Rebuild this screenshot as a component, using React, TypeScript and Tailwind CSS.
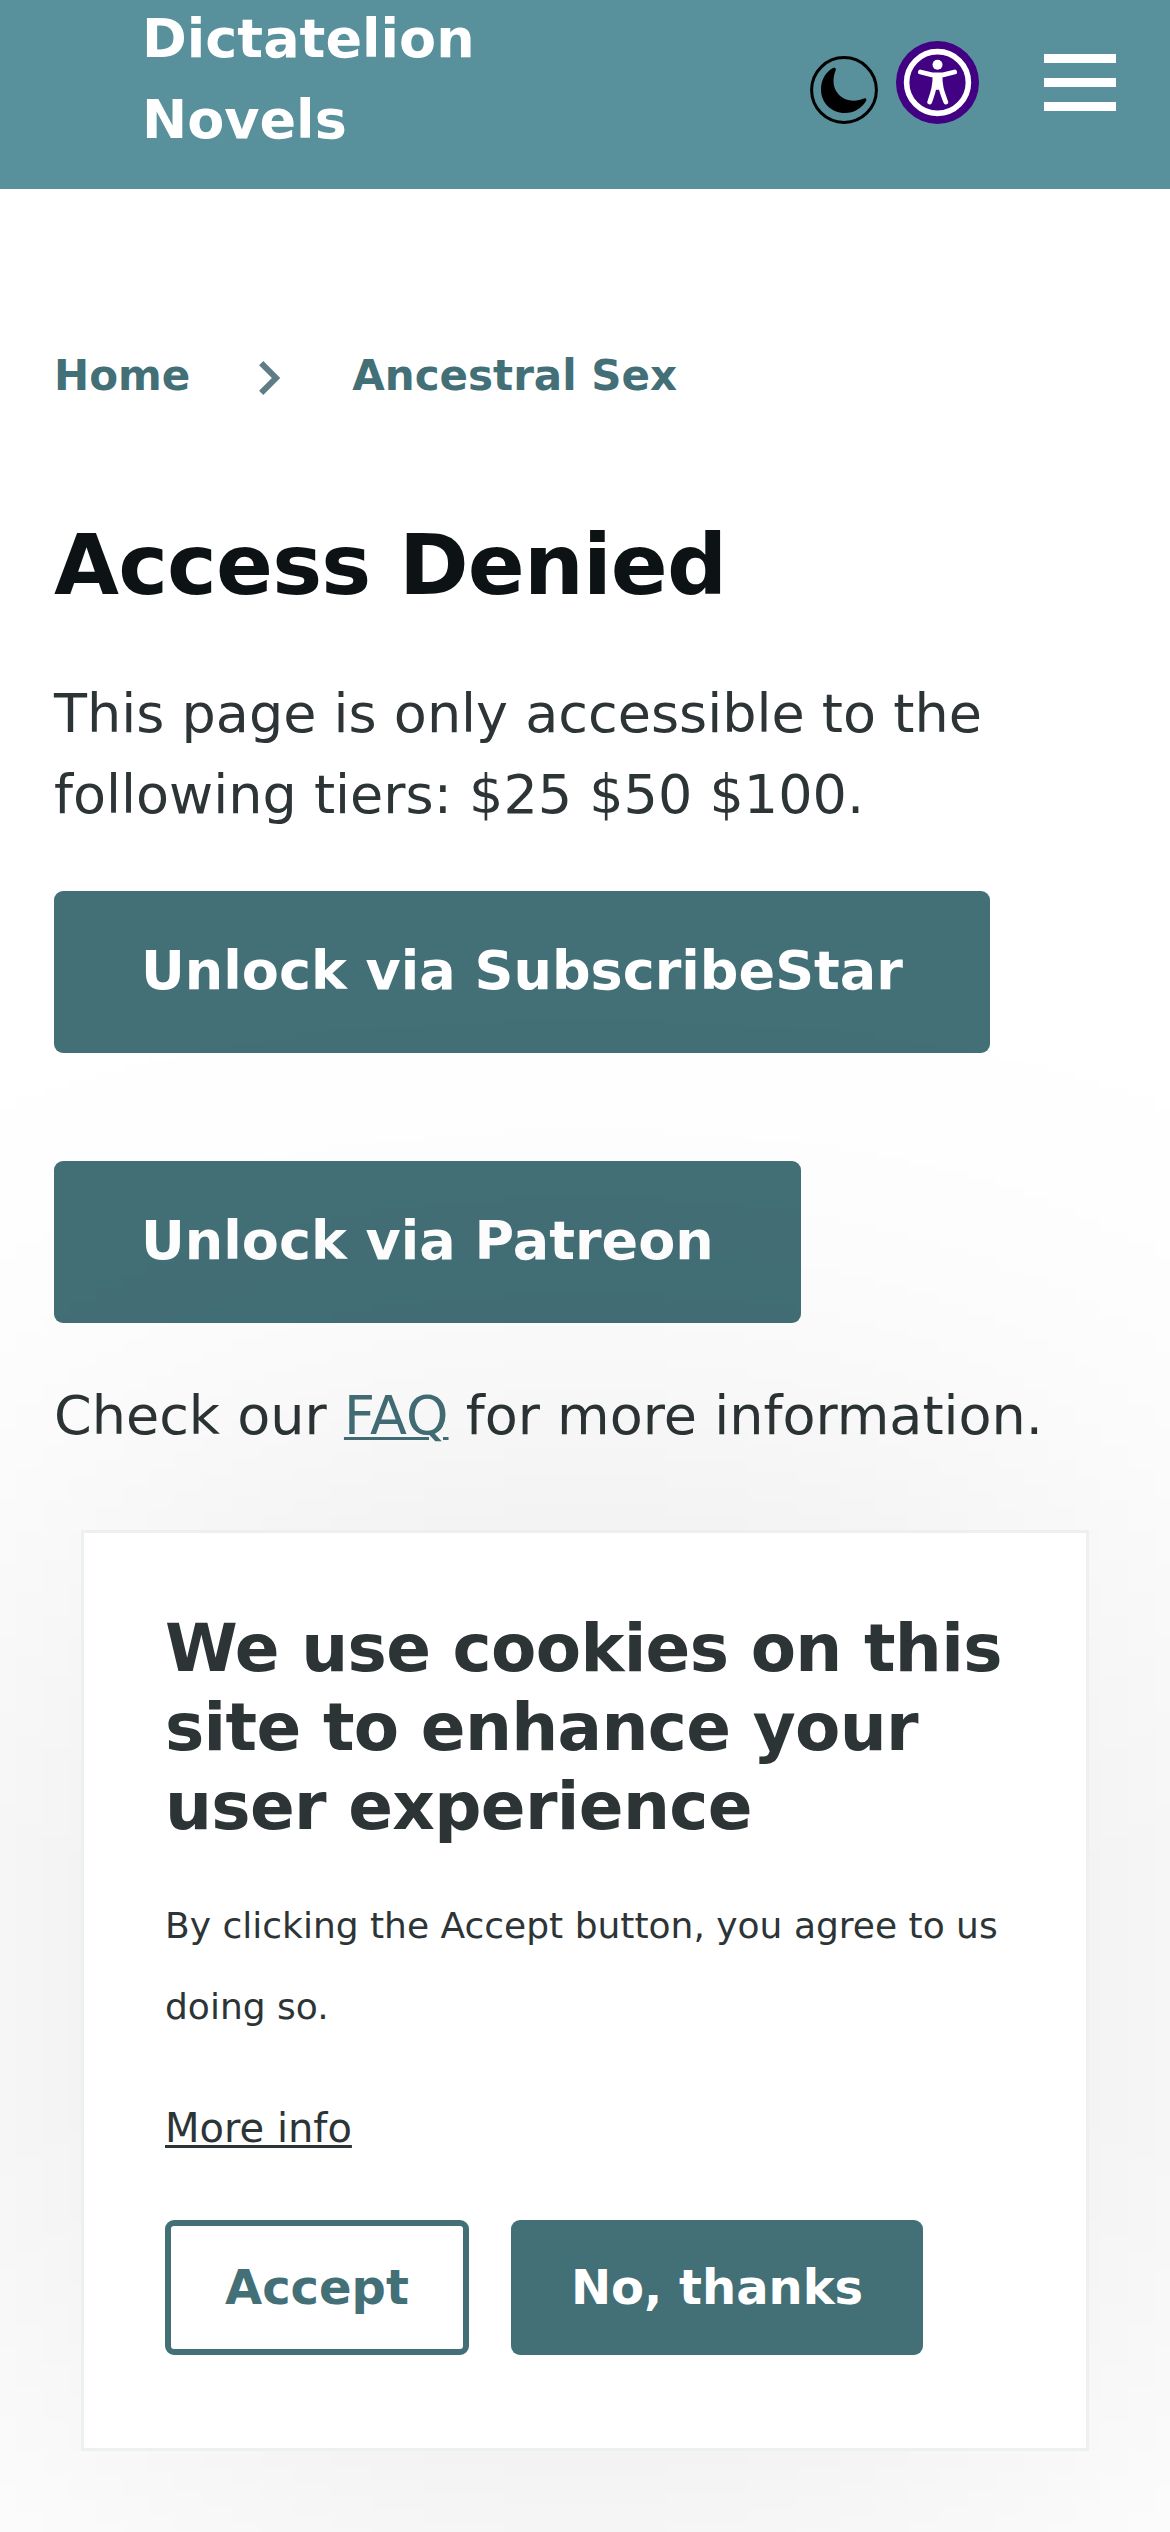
import React from 'react';

const breadcrumbs = ['Home', 'Ancestral Sex'];

function MoonIcon() {
  return (
    <svg width="68" height="68" viewBox="0 0 68 68" className="mt-[15px]">
      <circle cx="34" cy="34" r="32.4" fill="none" stroke="#000" strokeWidth="3" />
      <path
        d="M25.4 12.2 C24.5 11.5 23.5 11.7 22.5 12.3 C15 16.8 11 24.5 11 33.5 C11 47 21.5 57 34.8 57 C44 57 51.5 52.5 56 45 C56.8 43.5 56.5 41.8 54.5 42.2 C51 43.8 47.5 44.7 43.5 44.7 C32 44.7 23.5 36 23.5 25 C23.5 20.5 24.5 17.5 25.6 14.5 C25.9 13.6 26 12.7 25.4 12.2 Z"
        fill="#000"
      />
    </svg>
  );
}

function AccessibilityIcon() {
  return (
    <svg width="83" height="83" viewBox="0 0 83 83">
      <circle cx="41.5" cy="41.5" r="41.5" fill="#420083" />
      <circle cx="41.5" cy="41.5" r="30.9" fill="none" stroke="#fff" strokeWidth="5.6" />
      <circle cx="41.5" cy="23.8" r="5" fill="#fff" />
      <g fill="none" stroke="#fff" strokeWidth="4.8" strokeLinecap="round" strokeLinejoin="round">
        <path d="M24.4 31 L36 33.8 H47 L58.6 31" />
        <path d="M39 35 C39 45 37.5 50 33.7 61" />
        <path d="M44 35 C44 45 45.5 50 49.8 61" />
      </g>
      <path d="M38 34 H45 V48 L41.5 49 L38 48 Z" fill="#fff" />
    </svg>
  );
}

function Header() {
  return (
    <header className="flex h-[189px] justify-between bg-[#58909c] pl-[142px] pr-[54px]">
      <a href="#" className="-mt-0.5 w-[400px] text-[54px] leading-[81px] font-bold text-white">
        Dictatelion Novels
      </a>
      <div className="flex items-start pt-[41px]">
        <button aria-label="Dark mode"><MoonIcon /></button>
        <button aria-label="Accessibility" className="ml-[18px]"><AccessibilityIcon /></button>
        <button aria-label="Menu" className="mt-[13px] ml-[65px] flex w-[72px] flex-col gap-[15px]">
          <span className="h-[9px] w-full bg-white" />
          <span className="h-[9px] w-full bg-white" />
          <span className="h-[9px] w-full bg-white" />
        </button>
      </div>
    </header>
  );
}

function CookieBanner() {
  return (
    <div className="absolute top-[1530px] left-[81px] h-[921px] w-[1008px]">
      <div className="absolute inset-0 bg-black/10 blur-[270px]" />
      <section className="relative h-full border-[3px] border-[#edf0f0] bg-white px-[81px] pt-[76px]">
        <h2 className="text-[66px] leading-[79.2px] font-bold tracking-[-0.01em]">
          We use cookies on this site to enhance your user experience
        </h2>
        <p className="mt-[38.4px] text-[36px] leading-[81px]">
          By clicking the Accept button, you agree to us doing so.
        </p>
        <button className="mt-[54px] block text-[40px] leading-[54px] underline decoration-[3px] underline-offset-[3px]">
          More info
        </button>
        <div className="mt-[65px] flex gap-[42px]">
          <button className="h-[135px] rounded-[9px] border-6 border-[#436f77] px-[54px] pb-0.5 text-[48px] leading-none font-bold text-[#436f77]">
            Accept
          </button>
          <button className="h-[135px] rounded-[9px] bg-[#436f77] px-[60px] pb-0.5 text-[48px] leading-none font-bold text-white">
            No, thanks
          </button>
        </div>
      </section>
    </div>
  );
}

export default function App() {
  return (
    <div className="relative h-[2532px] w-[1170px] overflow-hidden bg-white font-['DejaVu_Sans',sans-serif] text-[#2d3436]">
      <Header />
      <main className="px-[54px] pt-[160px]">
        <nav className="flex items-center text-[42px] leading-[54px] font-bold text-[#436f77]">
          {breadcrumbs.map((crumb, i) => (
            <React.Fragment key={crumb}>
              {i > 0 && (
                <svg width="22" height="34" viewBox="0 0 22 34" className="mr-[71px] ml-[69px] mt-1">
                  <path d="M2.2 2.2 L17 17 L2.2 31.8" fill="none" stroke="#5f7d87" strokeWidth="6" />
                </svg>
              )}
              <a href="#">{crumb}</a>
            </React.Fragment>
          ))}
        </nav>
        <h1 className="mt-[108px] text-[84px] leading-[108px] font-bold tracking-[-0.01em] text-[#0d1214]">
          Access Denied
        </h1>
        <p className="mt-[54px] text-[54px] leading-[81px]">
          This page is only accessible to the following tiers: $25 $50 $100.
        </p>
        <div className="mt-[56px] flex flex-col items-start gap-[108px]">
          <a href="#" className="rounded-[9px] bg-[#436f77] px-[87px] pt-[39px] pb-[42px] text-[54px] leading-[81px] font-bold text-white">
            Unlock via SubscribeStar
          </a>
          <a href="#" className="rounded-[9px] bg-[#436f77] px-[87px] pt-[39px] pb-[42px] text-[54px] leading-[81px] font-bold text-white">
            Unlock via Patreon
          </a>
        </div>
        <p className="mt-[52px] text-[54px] leading-[81px]">
          Check our <a href="#" className="text-[#436f77] underline decoration-[3px] underline-offset-[3px]">FAQ</a> for more information.
        </p>
      </main>
      <CookieBanner />
    </div>
  );
}
